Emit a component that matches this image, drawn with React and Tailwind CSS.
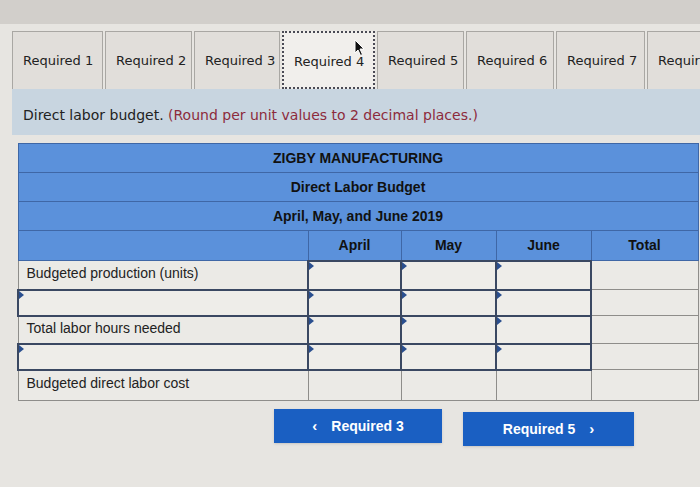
import React from "react";

const TABS = ["Required 1", "Required 2", "Required 3", "Required 4", "Required 5", "Required 6", "Required 7", "Requir"];
const TAB_W = [91, 87, 86, 93, 87, 88, 89, 60];

function Flag() {
  return <span className="absolute left-0 top-0 w-0 h-0 border-t-[4px] border-b-[4px] border-l-[5px] border-t-transparent border-b-transparent border-l-[#2a4f8f]" />;
}

function InputCell({ className = "" }) {
  return (
    <td className={`relative border-2 border-[#3a4862] bg-[#eeede9] ${className}`}>
      <Flag />
    </td>
  );
}

function Cell({ children, className = "" }) {
  return <td className={`border border-[#8e8d8a] bg-[#ebeae6] px-2 pb-[3px] text-[14px] text-[#222] ${className}`}>{children}</td>;
}

export default function App() {
  const rows = [
    { label: "Budgeted production (units)", input: false, h: "h-[29px]", months: true },
    { label: null, input: true, h: "h-[26px]", months: true },
    { label: "Total labor hours needed", input: false, h: "h-[28px]", months: true },
    { label: null, input: true, h: "h-[26px]", months: true },
    { label: "Budgeted direct labor cost", input: false, h: "h-[31px]", months: false },
  ];
  return (
    <div className="w-[700px] h-[487px] bg-[#e7e5e1] overflow-hidden relative" style={{ fontFamily: "'Liberation Sans', Arial, sans-serif" }}>
      <div className="h-[24px] bg-[#d2cfcb]" />
      <div className="pl-[12px] pt-[7px]">
        <div className="flex gap-[2px] items-end" style={{ fontFamily: "'DejaVu Sans', Verdana, sans-serif" }}>
          {TABS.map((t, i) => (
            <div
              key={t}
              style={{ width: TAB_W[i] }}
              className={`h-[58px] shrink-0 flex items-center pl-[10px] text-[13px] text-[#222] whitespace-nowrap overflow-hidden ${
                i === 3 ? "bg-[#f1efec] border-2 border-dotted border-[#4a4a55] pt-[4px]" : "bg-[#e1deda] border border-[#a9a7a3] border-b-0"
              }`}
            >
              {t}
            </div>
          ))}
        </div>
        <div className="h-[46px] bg-[#c8d5e0] flex items-center pl-[11px] pt-[6px] text-[14px] text-[#222]" style={{ fontFamily: "'DejaVu Sans', Verdana, sans-serif" }}>
          Direct labor budget.&nbsp;<span className="text-[#8d2b3c]">(Round per unit values to 2 decimal places.)</span>
        </div>
      </div>

      <div className="pl-[17px] pt-[8px]">
        <table className="border-collapse table-fixed w-[680px]">
          <colgroup>
            <col className="w-[290px]" />
            <col className="w-[93px]" />
            <col className="w-[95px]" />
            <col className="w-[95px]" />
            <col className="w-[107px]" />
          </colgroup>
          <tbody>
            {["ZIGBY MANUFACTURING", "Direct Labor Budget", "April, May, and June 2019"].map((t) => (
              <tr key={t} className="h-[29px]">
                <td colSpan={5} className="bg-[#5b91db] border border-[#3f67a6] text-center font-bold text-[14px] text-[#111]">
                  {t}
                </td>
              </tr>
            ))}
            <tr className="h-[30px]">
              <td className="bg-[#5b91db] border border-[#3f67a6]" />
              {["April", "May", "June", "Total"].map((m) => (
                <td key={m} className="bg-[#5b91db] border border-[#3f67a6] text-center font-bold text-[14px] text-[#111]">
                  {m}
                </td>
              ))}
            </tr>
            {rows.map((r, i) => (
              <tr key={i} className={r.h}>
                {r.input ? <InputCell /> : <Cell>{r.label}</Cell>}
                {r.months ? (
                  <>
                    <InputCell />
                    <InputCell />
                    <InputCell />
                  </>
                ) : (
                  <>
                    <Cell />
                    <Cell />
                    <Cell />
                  </>
                )}
                <Cell />
              </tr>
            ))}
          </tbody>
        </table>
      </div>

      <div className="flex gap-[21px] pl-[274px] pt-[8px]">
        <button className="w-[168px] h-[34px] bg-[#1a5fc2] text-white font-bold text-[14px] flex items-center justify-center gap-[14px] shadow-sm">
          <span className="text-[15px]">&lsaquo;</span>
          <span>Required 3</span>
        </button>
        <button className="w-[171px] h-[34px] mt-[3px] bg-[#1a5fc2] text-white font-bold text-[14px] flex items-center justify-center gap-[14px] shadow-sm">
          <span>Required 5</span>
          <span className="text-[15px]">&rsaquo;</span>
        </button>
      </div>

      <svg className="absolute left-[354px] top-[39px]" width="12" height="18" viewBox="0 0 12 18">
        <path d="M1 1 L1 14 L4 11 L6.5 16.5 L8.5 15.5 L6 10 L10 10 Z" fill="#111" stroke="#fff" strokeWidth="1" />
      </svg>
    </div>
  );
}
